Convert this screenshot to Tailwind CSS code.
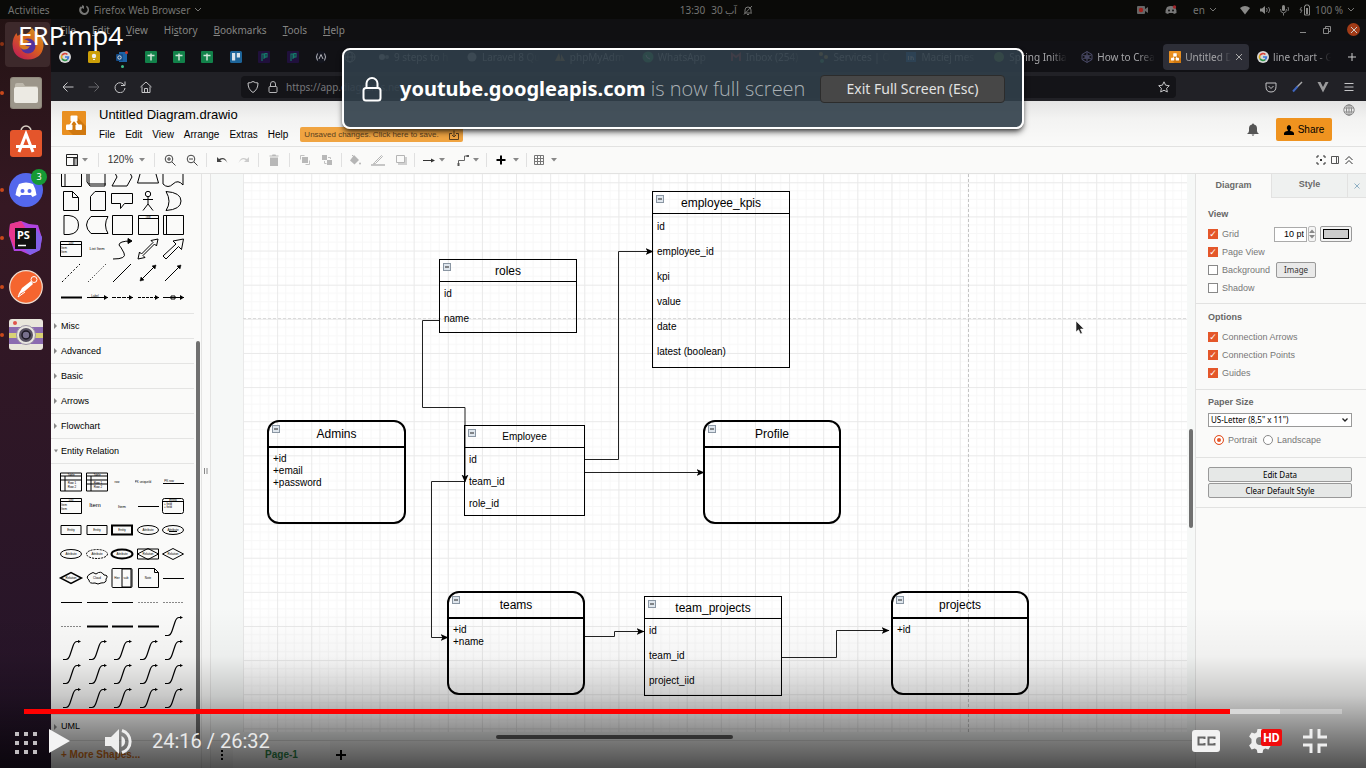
<!DOCTYPE html>
<html lang="en">
<head>
<meta charset="utf-8">
<meta name="viewport" content="width=device-width, initial-scale=1">
<title>ERP.mp4</title>
<script src="https://cdn.jsdelivr.net/npm/@tailwindcss/browser@4"></script>
</head>
<body class="bg-black">
<svg class="absolute size-0">
  <defs>
    <marker id="arrow" viewBox="0 0 8 8" refX="7.5" refY="4" markerWidth="8" markerHeight="8" markerUnits="userSpaceOnUse" orient="auto"><path d="M0 0.5L8 4L0 7.5L2 4Z" fill="#000" stroke="none"/></marker>
    <symbol id="google" viewBox="0 0 12 12"><circle cx="6" cy="6" r="6" fill="#d8d8d8"/><g fill="none" stroke-width="1.7"><path d="M3 4.3A3.4 3.4 0 0 1 8.4 3.5" stroke="#d8433a"/><path d="M3 4.2A3.4 3.4 0 0 0 3 7.8" stroke="#dba818"/><path d="M3 7.7A3.4 3.4 0 0 0 8.3 8.5" stroke="#2f9549"/><path d="M6 6h3.4A3.4 3.4 0 0 1 8.2 8.6" stroke="#3b74d8"/></g></symbol>
    <symbol id="sheet" viewBox="0 0 12 12"><rect width="12" height="12" rx="1" fill="#12824a"/><path d="M2.500 4.500h7M6 2.500v7" stroke="#cfe5d8" stroke-width="1.5"/></symbol>
    <symbol id="drawio" viewBox="0 0 24 24"><rect width="24" height="24" rx="1" fill="#e98f20"/><path d="M14 5l10 10v9H11L5 18l6-7z" fill="#d0780f"/><path d="M12 8L7 16M12 8l5 8" stroke="#fff" stroke-width="1.6"/><rect x="8.500" y="4.500" width="7" height="6" rx="1" fill="#fff"/><rect x="4" y="13.500" width="6.500" height="5.500" rx="1" fill="#fff"/><rect x="13.500" y="13.500" width="6.500" height="5.500" rx="1" fill="#fff"/></symbol>
    <symbol id="fold" viewBox="0 0 8 8"><rect x=".5" y=".5" width="7" height="7" fill="#dfe6ed" stroke="#8a96a3"/><path d="M2 4h4" stroke="#222"/></symbol>
    <symbol id="p" viewBox="0 0 12 12"><rect width="12" height="12" rx="1" fill="#20103c"/><path d="M4 10V3h2v5M7 7V2.500h2V6H7" fill="none" stroke="#147a68" stroke-width="1.1"/></symbol>
    <symbol id="caret" viewBox="0 0 6 4"><path d="M0 0h6L3 3.500z"/></symbol>
  </defs>
</svg>

<div class="relative flex h-screen flex-col overflow-hidden bg-[#121214] font-['Noto_Sans',sans-serif] text-[10px] leading-none text-[#858583]">

  <!-- System bar -->
  <header class="flex h-[19px] shrink-0 items-center bg-[#0a0a08] pr-[11px] pl-2 text-[#747472]">
    <div class="flex flex-1 items-center">
      <span>Activities</span>
      <svg class="ml-7 size-3" viewBox="0 0 12 12"><path d="M2.500 2.500A5 5 0 1 0 9.500 2.300L8 1.800l.6 2A3 3 0 1 1 4 4l2 1V2L4.300 1 3.700 3z" fill="#777775"/></svg>
      <span class="ml-1">Firefox Web Browser</span>
      <svg class="ml-1 h-1.5 w-2" viewBox="0 0 8 6"><path d="M1 1l3 3 3-3" fill="none" stroke="#777775"/></svg>
    </div>
    <div class="flex items-center gap-1.5">
      <span>13:30</span><span>30 &#x622;&#x628;</span>
      <svg class="size-2.5" viewBox="0 0 10 10"><path d="M1 8h8M2 7.500V5a3 3 0 0 1 6 0v2.500M4 9.500h2M1 9.500L9 1" fill="none" stroke="#777775"/></svg>
    </div>
    <div class="-ml-[70px] flex flex-1 items-center justify-end">
      <svg class="h-2.5 w-3" viewBox="0 0 12 10"><rect y="1" width="8" height="8" rx="1" fill="#666"/><path d="M8 4l3-2v6L8 6z" fill="#666"/><circle cx="4" cy="5" r="2.200" fill="#a3221d"/></svg>
      <svg class="ml-4 h-2.5 w-3" viewBox="0 0 12 10"><path d="M2 2q4-2 8 0q2 3 1.500 6L9 9l-1-1H4L3 9 .5 8Q0 5 2 2z" fill="#777"/><circle cx="4" cy="5.500" r="1" fill="#111"/><circle cx="8" cy="5.500" r="1" fill="#111"/><circle cx="9.500" cy="2" r="1.700" fill="#a0262b"/></svg>
      <span class="ml-4">en</span>
      <svg class="ml-1 h-1.5 w-2" viewBox="0 0 8 6"><path d="M1 1l3 3 3-3" fill="none" stroke="#777775"/></svg>
      <svg class="ml-[22px] h-2.5 w-3" viewBox="0 0 12 10"><path d="M1 3q5-4 10 0L6 9.500z" fill="#8a8a88"/></svg>
      <svg class="ml-2 h-2.5 w-3" viewBox="0 0 12 10"><path d="M1 3.500h2L6 1v8L3 6.500H1z" fill="#8a8a88"/><path d="M7.500 3q1.500 2 0 4M9.500 2q2.500 3 0 6" fill="none" stroke="#777"/></svg>
      <svg class="ml-2 h-3 w-3" viewBox="0 0 12 12"><rect x="3" y="1" width="3" height="6" rx="1.500" fill="#8a8a88"/><path d="M1.500 5q0 4 3 4t3-4M4.500 9v2.500M9 3q1 2 0 4" fill="none" stroke="#777"/></svg>
      <svg class="ml-2 h-3 w-3" viewBox="0 0 12 12"><path d="M2.500 3L1 6h2L1.500 9" fill="none" stroke="#777"/><path d="M5.500 2h1V1h3v1h1v9h-5z" fill="none" stroke="#8a8a88"/><path d="M7 4h2v6H7z" fill="#8a8a88"/></svg>
      <span class="ml-1">100 %</span>
      <svg class="ml-1 h-1.5 w-2" viewBox="0 0 8 6"><path d="M1 1l3 3 3-3" fill="none" stroke="#777775"/></svg>
    </div>
  </header>

  <div class="flex min-h-0 flex-1">
    <!-- Dock -->
    <nav class="w-[51px] shrink-0 bg-linear-to-b from-[#241314] via-[#351823] via-25% to-[#24142a] pt-px" aria-label="Dock">
      <div class="flex h-[339px] flex-col justify-between">
        <div class="flex h-12 items-center"><i class="size-1 rounded-full bg-[#8a3113]"></i>
          <div class="ml-px grid size-[45px] place-items-center rounded bg-[#3d292b]">
            <svg class="size-8" viewBox="0 0 32 32"><defs><linearGradient id="ff" x1="1" y1="0" x2=".2" y2="1"><stop offset="0" stop-color="#d0a020"/><stop offset=".5" stop-color="#d8621c"/><stop offset="1" stop-color="#c01d55"/></linearGradient></defs><path d="M20 0q2 3 5 5q7 5 6.500 13Q30 31 16 31.500Q1 31 .5 16Q1 9 4.500 5l1 3Q9 5 14 6q4-2 6-6z" fill="url(#ff)"/><circle cx="16" cy="18" r="7.500" fill="#53319c"/><path d="M7 13q5-4 11 1q-4 0-5 3q2 2 5 1q-3 5-8 3q-4-3-3-8z" fill="#d97a20"/></svg>
          </div></div>
        <div class="flex h-12 items-center"><i class="size-1 rounded-full bg-[#c9481b]"></i>
          <svg class="ml-[6px] size-8" viewBox="0 0 32 32"><rect width="32" height="32" rx="3" fill="#8f887c"/><rect x="1" y="1" width="30" height="30" rx="3" fill="#9c968a"/><path d="M5 8q0-2 2-2h6l2 3h11q2 0 2 2v3H5z" fill="#bdb8ac"/><rect x="4" y="10" width="24" height="16" rx="2" fill="#eceae3"/></svg></div>
        <div class="flex h-12 items-center"><i class="size-1"></i>
          <svg class="ml-[6px] h-8 w-8" viewBox="0 0 32 32"><path d="M11 6a5 5 0 0 1 10 0" fill="none" stroke="#d9d0c5" stroke-width="1.500"/><rect x="0" y="5" width="32" height="27" rx="3" fill="#e4552b"/><path d="M9 27l7-18 7 18M6 21.500h20" fill="none" stroke="#fff" stroke-width="3"/></svg></div>
        <div class="flex h-12 items-center"><i class="size-1 rounded-full bg-[#c9481b]"></i>
          <div class="relative ml-[5px]"><svg class="size-[34px]" viewBox="0 0 34 34"><circle cx="17" cy="17" r="17" fill="#5468ec"/><path d="M10 11q7-3 14 0q3 5 3.500 11l-4 2-1.500-2H12l-1.500 2-4-2Q7 16 10 11z" fill="#fff"/><circle cx="13.500" cy="18" r="2" fill="#5468ec"/><circle cx="20.500" cy="18" r="2" fill="#5468ec"/></svg>
            <span class="absolute -top-1 -right-1 grid size-4 place-items-center rounded-full bg-[#169a35] text-[9px] text-white">3</span></div></div>
        <div class="flex h-12 items-center"><i class="size-1 rounded-full bg-[#c9481b]"></i>
          <svg class="ml-[5px] size-[34px]" viewBox="0 0 34 34"><path d="M1 3l11-3 8 3 9 1 4 13-2 12-10 5-9-4H5L0 14z" fill="#b044e0"/><path d="M1 3l11-3 4 6-9 20H5L0 14z" fill="#e8388e"/><path d="M27 8l6 8-2 13-10 5-5-5z" fill="#8260e8"/><rect x="6" y="7" width="21" height="21" fill="#111"/><text x="8" y="18" font-size="11" font-weight="700" fill="#fff" font-family="Noto Sans, sans-serif">PS</text><path d="M9 24.500h8" stroke="#fff" stroke-width="1.500"/></svg></div>
        <div class="flex h-12 items-center"><i class="size-1 rounded-full bg-[#c9481b]"></i>
          <svg class="ml-[5px] size-[34px]" viewBox="0 0 34 34"><circle cx="17" cy="17" r="16.300" fill="#f5652f" stroke="#f0dccf" stroke-width="1.200"/><circle cx="25" cy="9.500" r="3" fill="none" stroke="#fff"/><path d="M22 11l-9 7-4 7 7-4 8-7z" fill="#fff"/><path d="M16 22l-7 5 2-4M14 20l6-6" stroke="#fff" fill="none"/></svg></div>
        <div class="flex h-12 items-center"><i class="size-1 rounded-full bg-[#c9481b]"></i>
          <svg class="ml-[5px] h-8 w-[34px]" viewBox="0 0 34 32"><rect width="34" height="31" rx="3" fill="#e9e6dc"/><path d="M0 8h34v6H0zM0 19h34v6H0z" fill="#8b6bb0"/><path d="M0 14h34v5H0z" fill="#d9d275"/><circle cx="6" cy="4" r="2" fill="#e0534c"/><circle cx="17" cy="16" r="9.500" fill="#e8e5e0" stroke="#9b93a5"/><circle cx="17" cy="16" r="7" fill="#575161"/><circle cx="17" cy="16" r="4" fill="#77708c" stroke="#1b1722" stroke-width="1.500"/></svg></div>
      </div>
    </nav>

    <!-- Browser -->
    <div class="flex min-w-0 flex-1 flex-col">
      <div class="flex h-[22px] shrink-0 items-center justify-between bg-[#101012] pr-1.5 pb-px pl-[9px]">
        <nav class="flex gap-4"><a href="#"><u>F</u>ile</a><a href="#"><u>E</u>dit</a><a href="#"><u>V</u>iew</a><a href="#">Hi<u>s</u>tory</a><a href="#"><u>B</u>ookmarks</a><a href="#"><u>T</u>ools</a><a href="#"><u>H</u>elp</a></nav>
        <div class="flex items-center gap-4">
          <button aria-label="Minimise"><svg class="size-2" viewBox="0 0 8 8"><path d="M1 6.500h6" stroke="#888"/></svg></button>
          <button aria-label="Restore"><svg class="size-2" viewBox="0 0 8 8"><path d="M.5 2.500h5v5h-5zM2.500 2V.5h5v5H6" fill="none" stroke="#888"/></svg></button>
          <button aria-label="Close" class="grid size-[13px] place-items-center rounded-full bg-[#a13b17]"><svg class="size-2" viewBox="0 0 8 8"><path d="M1 1l6 6M7 1L1 7" stroke="#ccc"/></svg></button>
        </div>
      </div>

      <div class="flex h-[31px] shrink-0 items-center bg-[#111115]">
        <div class="grid w-[313px] shrink-0 grid-cols-11 items-center justify-items-center">
          <svg class="size-3"><use href="#google"/></svg>
          <svg class="size-3" viewBox="0 0 12 12"><rect width="12" height="12" rx="1.500" fill="#cc9f08"/><circle cx="6" cy="5" r="2.200" fill="#eee"/><path d="M5 8.500h2" stroke="#eee"/></svg>
          <span class="relative"><svg class="size-3" viewBox="0 0 12 12"><rect x="3" y="1" width="8" height="10" fill="#1c62a5"/><rect y="3" width="7" height="7" rx="1" fill="#154c87"/><circle cx="3.500" cy="6.500" r="1.700" fill="none" stroke="#ddd"/><circle cx="10.500" cy="1.500" r="1.500" fill="#c3382b"/></svg><i class="absolute top-[14px] left-[5px] size-[3px] rounded-full bg-[#3fbf8a]"></i></span>
          <svg class="size-3"><use href="#sheet"/></svg>
          <svg class="size-3"><use href="#sheet"/></svg>
          <svg class="size-3"><use href="#sheet"/></svg>
          <svg class="size-3" viewBox="0 0 12 12"><rect width="12" height="12" rx="1.500" fill="#1d6499"/><path d="M2 2h3.200v7.500H2zM6.800 2H10v4.500H6.800z" fill="#d8e2ea"/></svg>
          <svg class="size-3"><use href="#p"/></svg>
          <svg class="size-3"><use href="#p"/></svg>
          <svg class="size-3" viewBox="0 0 12 12"><circle cx="6" cy="6" r="6" fill="#14161f"/><path d="M2.500 2.500q-2 3.500 0 7M9.500 2.500q2 3.500 0 7M4 8l2-4.500L8 8" fill="none" stroke="#b5b5bb"/></svg>
          <svg class="size-3" viewBox="0 0 12 12" fill="none" stroke="#999"><circle cx="6" cy="6" r="5"/><ellipse cx="6" cy="6" rx="2.300" ry="5"/><path d="M1 6h10"/></svg>
        </div>
        <div class="ml-2 grid min-w-0 flex-1 grid-cols-11 gap-0.5 text-[#a5a5a8] [&>div]:flex [&>div]:h-[26px] [&>div]:min-w-0 [&>div]:items-center [&>div]:gap-1 [&>div]:rounded-sm [&>div]:pr-1.5 [&>div]:pl-1.5 [&_svg]:shrink-0 [&_span]:min-w-0 [&_span]:flex-1 [&_span]:overflow-hidden [&_span]:leading-4 [&_span]:whitespace-nowrap [&_span]:mask-r-from-70%">
          <div><svg class="size-3" viewBox="0 0 12 12"><circle cx="4" cy="6" r="3" fill="#aaa"/><circle cx="9" cy="6" r="2" fill="#888"/></svg><span>9 steps to h</span></div>
          <div><svg class="size-3" viewBox="0 0 12 12"><circle cx="6" cy="6" r="4.500" fill="#aaa"/></svg><span>Laravel 8 Qu</span></div>
          <div><svg class="size-3" viewBox="0 0 12 12"><path d="M1 10L5 2l2 8zM7 10V3l4 7z" fill="#b07a2a"/></svg><span>phpMyAdm</span></div>
          <div><svg class="size-3" viewBox="0 0 12 12"><circle cx="6" cy="6" r="5.500" fill="#24a850"/><path d="M4 4q0 3 4 4" stroke="#fff" fill="none"/></svg><span>WhatsApp</span></div>
          <div><svg class="size-3" viewBox="0 0 12 12"><path d="M2 10V3l4 3 4-3v7" fill="none" stroke="#c33" stroke-width="2"/></svg><span>Inbox (254)</span></div>
          <div><svg class="size-3" viewBox="0 0 12 12"><circle cx="3" cy="3" r="2" fill="#c93"/><circle cx="8" cy="6" r="2" fill="#c93"/><circle cx="4" cy="10" r="2" fill="#3a6"/></svg><span>Services | O</span></div>
          <div><svg class="size-3" viewBox="0 0 12 12"><rect x="1" y="1" width="10" height="10" fill="#1b69b8"/><path d="M3.500 5v4M6 9V5M6 6.500q2.500-2 2.500 2.500" stroke="#fff" fill="none"/></svg><span>Maciej mes</span></div>
          <div><svg class="size-3" viewBox="0 0 12 12"><circle cx="6" cy="6" r="5" fill="#5a9a3a"/></svg><span>Spring Initia</span></div>
          <div><svg class="size-3" viewBox="0 0 12 12" fill="none" stroke="#4a4a66"><circle cx="6" cy="6" r="2"/><path d="M6 .5l5 3v5l-5 3-5-3v-5zM1 3.500l10 5M11 3.500l-10 5M6 .5v11"/></svg><span>How to Crea</span></div>
          <div class="bg-[#2d2e37]"><svg class="size-3"><use href="#drawio"/></svg><span>Untitled D</span><button aria-label="Close tab"><svg class="size-2" viewBox="0 0 8 8"><path d="M1 1l6 6M7 1L1 7" stroke="#aaa"/></svg></button></div>
          <div><svg class="size-3"><use href="#google"/></svg><span>line chart - G</span></div>
        </div>
        <button aria-label="New tab" class="grid w-[29px] shrink-0 place-items-center"><svg class="size-2.5" viewBox="0 0 10 10"><path d="M5 1v8M1 5h8" stroke="#ccc"/></svg></button>
      </div>

      <div class="flex h-[29px] shrink-0 items-center bg-[#212126]">
        <div class="flex w-[190px] shrink-0 gap-3.5 pl-[11px] [&_svg]:size-3 [&_svg]:fill-none">
          <button aria-label="Back"><svg viewBox="0 0 12 12" stroke="#c5c5c7"><path d="M11.500 6H1M5.500 1.500L1 6l4.500 4.500"/></svg></button>
          <button aria-label="Forward"><svg viewBox="0 0 12 12" stroke="#66666a"><path d="M.5 6H11M6.500 1.500L11 6l-4.500 4.500"/></svg></button>
          <button aria-label="Reload"><svg viewBox="0 0 12 12" stroke="#c5c5c7"><path d="M10.500 4.500A5 5 0 1 0 11 7M11 .5V4.500H7"/></svg></button>
          <button aria-label="Home"><svg viewBox="0 0 12 12" stroke="#c5c5c7"><path d="M.5 6L6 1l5.500 5M2 5.500v6h8v-6M4.500 11V7.500h3V11"/></svg></button>
        </div>
        <div class="flex h-[22px] min-w-0 flex-1 items-center rounded-sm bg-[#141418] px-1.5">
          <svg class="size-3" viewBox="0 0 12 12" fill="none" stroke="#c5c5c7"><path d="M6 .5Q8.500 2 11 2q0 6.500-5 9.500Q1 8.500 1 2q2.500 0 5-1.500z"/></svg>
          <svg class="ml-2 size-3" viewBox="0 0 12 12" fill="none" stroke="#b5b5b7"><rect x="2" y="5.500" width="8" height="6" rx="1"/><path d="M3.500 5.500V3a2.500 2.500 0 0 1 5 0v2.500"/></svg>
          <input aria-label="Address" class="ml-[7px] min-w-0 flex-1 bg-transparent text-[#77777b]" value="https://app.diagrams.net">
          <svg class="size-3" viewBox="0 0 12 12" fill="none" stroke="#c5c5c7"><path d="M6 .8l1.600 3.400 3.700.5-2.700 2.600.7 3.700L6 9.200 2.700 11l.7-3.700L.7 4.700l3.700-.5z"/></svg>
        </div>
        <div class="flex w-[190px] shrink-0 items-center justify-end gap-3.5 pr-[11px] [&_svg]:size-3">
          <svg viewBox="0 0 12 12" fill="none" stroke="#c5c5c7"><path d="M1 2h10v3.500Q11 11 6 11T1 5.500zM3.500 5L6 7.500 8.500 5"/></svg>
          <svg viewBox="0 0 12 12"><path d="M11 1L6 6" stroke="#aaa" stroke-width="1.500"/><path d="M6.500 5.500L2 10.500" stroke="#3f66c0" stroke-width="2"/></svg>
          <svg viewBox="0 0 12 12"><path d="M.5 1h3L6 6l2.500-5h3L6 11.500z" fill="#9a9a9c"/></svg>
          <svg viewBox="0 0 12 12"><path d="M1.500 2.500h9M1.500 6h9M1.500 9.500h9" stroke="#c5c5c7"/></svg>
        </div>
      </div>

      <!-- Diagram editor -->
      <main class="flex min-h-0 flex-1 flex-col bg-[#fafaf9] font-['Liberation_Sans',Arial,sans-serif] text-black">
        <div class="flex h-[46px] shrink-0 border-b border-[#e2e2e1] bg-linear-to-b from-[#e4e4e4] via-[#f3f3f2] via-40% to-[#fafaf9] pt-1.5 pl-[11px]">
          <svg class="mt-1 h-6 w-6"><use href="#drawio"/></svg>
          <div class="ml-[13px] flex-1">
            <h1 class="text-[13px] leading-4">Untitled Diagram.drawio</h1>
            <div class="flex items-center pt-1">
              <nav class="flex gap-2.5"><a href="#">File</a><a href="#">Edit</a><a href="#">View</a><a href="#">Arrange</a><a href="#">Extras</a><a href="#">Help</a></nav>
              <button class="ml-3 flex h-[15px] w-[163px] items-center justify-between rounded-xs bg-[#f0a441] px-1 text-[8px] whitespace-nowrap text-[#5a4020]">Unsaved changes. Click here to save.
                <svg class="size-2.5 shrink-0" viewBox="0 0 10 10" fill="none" stroke="#5a4020"><path d="M3 3.500H.5v6h9v-6H7M5 .5V7M3 5l2 2 2-2"/></svg></button>
            </div>
          </div>
          <svg class="mt-4 mr-[17px] h-[13px] w-3" viewBox="0 0 12 13"><path d="M0 11q2-1.500 2-3V5.500A4 4 0 0 1 5 1.600a1 1 0 0 1 2 0A4 4 0 0 1 10 5.500V8q0 1.500 2 3zM4.500 11.500h3L6 13z" fill="#555"/></svg>
          <button class="mt-[11px] flex h-[23px] w-14 items-center justify-center gap-1 rounded-xs bg-[#ef931f] text-[10px]">
            <svg class="size-2.5" viewBox="0 0 10 10"><path d="M5 0a2.500 2.800 0 0 1 1.200 5v1q3.500.5 3.800 2.200V10H0V8.200Q.3 6.500 3.800 6V5A2.500 2.800 0 0 1 5 0z"/></svg>Share</button>
          <svg class="-mt-[3px] mx-[11px] size-3" viewBox="0 0 12 12" fill="none" stroke="#8a8a8a"><circle cx="6" cy="6" r="5.200"/><ellipse cx="6" cy="6" rx="2.500" ry="5.200"/><path d="M1 4h10M1 8h10M6 1v10"/></svg>
        </div>

        <div class="flex h-[27px] shrink-0 items-center border-b border-[#e2e2e1] pl-[5px] text-[#333] [&>div]:flex [&>div]:h-[14px] [&>div]:items-center [&>div]:justify-center [&>div]:border-r [&>div]:border-[#e0e0e0] [&_svg]:size-3 [&_.c]:h-1 [&_.c]:w-1.5 [&_.c]:fill-[#888]">
          <div class="w-[43px] gap-1"><svg viewBox="0 0 12 12" fill="none" stroke="#222"><path d="M.5.5h11v11H.5zM.5 3.500h11M8 3.500v8"/><path d="M8 4h3.500v7.500H8z" fill="#aaa"/></svg><svg class="c"><use href="#caret"/></svg></div>
          <div class="w-14 gap-1.5 text-[10px]">120%<svg class="c"><use href="#caret"/></svg></div>
          <div class="w-[52px] gap-2.5"><svg viewBox="0 0 12 12" fill="none" stroke="#444"><circle cx="5" cy="5" r="3.800"/><path d="M8 8l3.500 3.500M3 5h4M5 3v4"/></svg><svg viewBox="0 0 12 12" fill="none" stroke="#444"><circle cx="5" cy="5" r="3.800"/><path d="M8 8l3.500 3.500M3 5h4"/></svg></div>
          <div class="w-[52px] gap-2.5"><svg viewBox="0 0 12 12"><path d="M1 3v5h5L4.200 6.200Q8 3.500 11.500 9Q9 1.500 3 5z" fill="#444"/></svg><svg viewBox="0 0 12 12"><path d="M11 3v5H6l1.800-1.800Q4 3.500 .5 9Q3 1.500 9 5z" fill="#ccc"/></svg></div>
          <div class="w-[31px]"><svg viewBox="0 0 12 12" fill="#b8b8b8"><path d="M2 3.500h8V12H2zM1.500 1.500H4l.5-1h3l.5 1h2.500v1h-9z"/></svg></div>
          <div class="w-[52px] gap-2.5"><svg viewBox="0 0 12 12" fill="#b8b8b8"><path d="M3 3h6v6H3z"/><path d="M1.500 5.500v-4h4M10.500 6.500v4h-4" fill="none" stroke="#c2c2c2"/></svg><svg viewBox="0 0 12 12" fill="#b8b8b8"><path d="M1 1h5v5H1zM6 6h5v5H6z"/><path d="M3.500 7v2.500h2M7 3.500h2.500V5" fill="none" stroke="#c2c2c2"/></svg></div>
          <div class="w-[73px] gap-2.5"><svg viewBox="0 0 12 12"><path d="M5 1l5 5-4.500 4.500L1 6.500z" fill="#b5b5b5"/><path d="M3 1l3 3" stroke="#b5b5b5"/><circle cx="11" cy="9.500" r="1" fill="#b5b5b5"/></svg><svg class="w-3.5!" viewBox="0 0 14 12"><path d="M3.500 8.500l7-7 1 1-7 7-2 .5z" fill="none" stroke="#b5b5b5"/><path d="M0 11h14" stroke="#b5b5b5" stroke-width="1.500"/></svg><svg viewBox="0 0 12 12"><path d="M3 3h9v8H3z" fill="#d0d0d0"/><path d="M1.500 1.500h8v7h-8z" fill="#fafaf9" stroke="#b5b5b5"/></svg></div>
          <div class="w-[72px] gap-1"><svg viewBox="0 0 12 12"><path d="M0 6.500h9" stroke="#333"/><path d="M8 4.500l4 2-4 2z" fill="#333"/></svg><svg class="c"><use href="#caret"/></svg><svg class="ml-2" viewBox="0 0 12 12"><path d="M1.500 10V6.500h6V2h3" fill="none" stroke="#666"/><path d="M.5 9h2v3h-2zM9.500 1H12v2H9.500z" fill="#555"/></svg><svg class="c"><use href="#caret"/></svg></div>
          <div class="w-10 gap-1.5"><svg viewBox="0 0 12 12"><path d="M6 1.500v9M1.500 6h9" stroke="#000" stroke-width="2"/></svg><svg class="c"><use href="#caret"/></svg></div>
          <div class="w-9 gap-1.5 border-r-0!"><svg viewBox="0 0 12 12" fill="none" stroke="#777"><path d="M1.500 1.500h9v9h-9zM4.500 1.500v9M7.500 1.500v9M1.500 4.500h9M1.500 7.500h9"/></svg><svg class="c"><use href="#caret"/></svg></div>
          <span class="ml-auto flex gap-1 pr-3 [&_svg]:size-2.5!"><svg viewBox="0 0 10 10" fill="none" stroke="#333"><path d="M1 3V1h2M7 1h2v2M9 7v2H7M3 9H1V7"/><rect x="4.500" y="4.500" width="1" height="1"/></svg><svg viewBox="0 0 10 10" fill="none" stroke="#555"><path d="M1.500 1.500h7v7h-7zM6.500 1.500v7"/></svg><svg viewBox="0 0 10 10" fill="none" stroke="#333"><path d="M1.500 5L5 1.500 8.500 5M1.500 9L5 5.500 8.500 9"/></svg></span>
        </div>

        <div class="flex min-h-0 flex-1">
          <!-- Shape library -->
          <aside class="flex w-[151px] shrink-0 flex-col border-r border-[#e4e4e3] text-[9px]">
            <div class="flex min-h-0 flex-1">
              <div class="w-[143px] shrink-0 overflow-hidden">
                <div class="flex h-[139px] flex-col justify-end overflow-hidden pr-2 pb-1 pl-[7px]"><div id="general" class="grid grid-cols-5"></div></div>
                <div class="[&>button]:flex [&>button]:h-[25px] [&>button]:w-full [&>button]:items-center [&>button]:gap-[3px] [&>button]:border-t [&>button]:border-[#e4e4e3] [&>button]:pl-[3px] [&_svg]:w-1 [&_svg]:h-1.5 [&_svg]:fill-[#888]">
                  <button><svg viewBox="0 0 4 6"><path d="M0 0l3 3-3 3z"/></svg>Misc</button>
                  <button><svg viewBox="0 0 4 6"><path d="M0 0l3 3-3 3z"/></svg>Advanced</button>
                  <button><svg viewBox="0 0 4 6"><path d="M0 0l3 3-3 3z"/></svg>Basic</button>
                  <button><svg viewBox="0 0 4 6"><path d="M0 0l3 3-3 3z"/></svg>Arrows</button>
                  <button><svg viewBox="0 0 4 6"><path d="M0 0l3 3-3 3z"/></svg>Flowchart</button>
                  <button><svg viewBox="0 0 4 6"><path d="M0 1.500h4L2 4.500z"/></svg>Entity Relation</button>
                </div>
                <div class="border-t border-[#e4e4e3] pt-1.5 pr-2 pb-1 pl-[7px]"><div id="entity" class="grid grid-cols-5"></div></div>
                <button class="flex h-6 w-full items-center gap-[3px] border-t border-[#e4e4e3] pl-[3px]"><svg class="h-1.5 w-1 fill-[#888]" viewBox="0 0 4 6"><path d="M0 0l3 3-3 3z"/></svg>UML</button>
              </div>
              <div class="flex-1 pt-[167px]"><div class="mx-auto h-full w-1 rounded-t bg-[#707070]"></div></div>
            </div>
            <button class="h-7 shrink-0 border-t border-[#dcdcdb] pl-2.5 text-left text-[10px] font-bold text-[#d9741a]">+ More Shapes...</button>
          </aside>
          <div class="grid w-[9px] shrink-0 place-items-center border-r border-[#e4e4e3]"><svg class="h-1.5 w-1" viewBox="0 0 4 6"><path d="M.5 0v6M3 0v6" stroke="#888"/></svg></div>

          <div class="flex min-w-0 flex-1 flex-col">
            <div class="relative flex min-h-0 flex-1 bg-[#f6f8f7] pr-2 pb-2 pl-8">
              <!-- Drawing page -->
              <div class="relative min-w-0 flex-1 overflow-hidden bg-white [&>section]:absolute [&>section]:border-black [&_h2]:flex [&_h2]:items-center [&_h2]:justify-center [&_h2]:border-black [&_h2]:text-[12px] [&_section>svg]:absolute [&_section>svg]:top-[3px] [&_section>svg]:left-[3px] [&_section>svg]:size-2 [&_p]:flex [&_p]:items-center [&_p]:pl-1">
                <svg class="absolute inset-0 h-full w-full">
                  <defs>
                    <pattern id="grid" width="34.13" height="34.13" x="0" y="8.3" patternUnits="userSpaceOnUse"><path d="M8.530 0V34.130M17.070 0V34.130M25.600 0V34.130M0 8.530H34.130M0 17.070H34.130M0 25.600H34.130" stroke="#f7f7f7"/><path d="M.5 0V34.130M0 .5H34.130" stroke="#e9e9e9"/></pattern>
                  </defs>
                  <rect width="100%" height="100%" fill="url(#grid)"/>
                  <g transform="translate(-243 -174)" fill="none" stroke="#222">
                    <path d="M968.500 174V760" stroke="#c4c4c4" stroke-dasharray="3 2"/><path d="M243 318.500H1190" stroke="#dadada" stroke-dasharray="3 2"/>
                    <g marker-end="url(#arrow)">
                      <path d="M439 320.500H422.500V407.500H465V482"/><path d="M585 459.500H618.500V251.500H653"/><path d="M585 472.500H704"/><path d="M465 481.500H431.500V637.500H448"/><path d="M585 636.500H614.500V631.500H644"/><path d="M781 657.500H836.500V630.500H889"/>
                    </g>
                  </g>
                </svg>
                <section class="top-[85px] left-[196px] w-[138px] border"><svg><use href="#fold"/></svg><h2 class="h-[22px] border-b">roles</h2><div class="h-[50px] pb-0.5"><p class="h-6">id</p><p class="h-[26px]">name</p></div></section>
                <section class="top-[17px] left-[409px] w-[138px] border"><svg><use href="#fold"/></svg><h2 class="h-[22px] border-b">employee_kpis</h2><div class="grid h-[153px] grid-rows-6 pb-0.5"><p>id</p><p>employee_id</p><p>kpi</p><p>value</p><p>date</p><p>latest (boolean)</p></div></section>
                <section class="top-[246px] left-[24px] h-[104px] w-[139px] rounded-xl border-2"><svg><use href="#fold"/></svg><h2 class="h-[26px] border-b-2">Admins</h2><p class="mt-[5px] h-3">+id</p><p class="h-3">+email</p><p class="h-3">+password</p></section>
                <section class="top-[251px] left-[221px] w-[121px] border"><svg><use href="#fold"/></svg><h2 class="h-[22px] border-b text-[10px]!">Employee</h2><div class="pt-px"><p class="h-[22px]">id</p><p class="h-[22px]">team_id</p><p class="h-[22px]">role_id</p></div></section>
                <section class="top-[246px] left-[460px] h-[104px] w-[138px] rounded-xl border-2"><svg><use href="#fold"/></svg><h2 class="h-[26px] border-b-2">Profile</h2></section>
                <section class="top-[417px] left-[204px] h-[104px] w-[138px] rounded-xl border-2"><svg><use href="#fold"/></svg><h2 class="h-[26px] border-b-2">teams</h2><p class="mt-[5px] h-3">+id</p><p class="h-3">+name</p></section>
                <section class="top-[422px] left-[401px] w-[138px] border"><svg><use href="#fold"/></svg><h2 class="h-[22px] border-b">team_projects</h2><div class="grid h-[76px] grid-rows-3 pb-0.5"><p>id</p><p>team_id</p><p>project_iid</p></div></section>
                <section class="top-[417px] left-[648px] h-[104px] w-[138px] rounded-xl border-2"><svg><use href="#fold"/></svg><h2 class="h-[26px] border-b-2">projects</h2><p class="mt-[5px] h-3">+id</p></section>
              </div>
              <i class="absolute top-[255px] right-0.5 h-[99px] w-1 rounded bg-[#707070]"></i>
              <i class="absolute bottom-px left-[29%] h-1 w-[24%] rounded bg-[#606060]"></i>
            </div>
            <div class="flex h-7 shrink-0 items-center border-t border-[#dcdcdb] bg-[#f4f4f3]">
              <button aria-label="Pages" class="grid w-[22px] place-items-center"><svg class="h-3 w-1" viewBox="0 0 4 12"><path d="M1 1h2v2H1zM1 5h2v2H1zM1 9h2v2H1z"/></svg></button>
              <button class="h-full w-[97px] bg-[#fcfcfb] text-[10px] font-bold text-[#2f8a4a]">Page-1</button>
              <button aria-label="Insert page" class="grid w-[22px] place-items-center"><svg class="size-2.5" viewBox="0 0 10 10"><path d="M5 0v10M0 5h10" stroke="#000" stroke-width="2"/></svg></button>
            </div>
          </div>

          <!-- Format panel -->
          <aside class="w-[171px] shrink-0 border-l border-[#e2e2e1] text-[9px] text-[#777] [&_h3]:font-bold [&_h3]:text-[#666] [&_label]:flex [&_label]:items-center [&_label]:gap-1 [&_input[type=checkbox]]:size-2.5 [&_input[type=checkbox]]:appearance-none [&_input[type=checkbox]]:border [&_input[type=checkbox]]:border-[#888] [&_input[type=checkbox]]:bg-white [&_input[type=checkbox]:checked]:border-[#e4572a] [&_input[type=checkbox]:checked]:bg-[#e4572a] [&_i]:-ml-[14px] [&_i]:w-2.5 [&_i]:text-center [&_i]:font-['DejaVu_Sans'] [&_i]:text-[9px] [&_i]:font-bold [&_i]:text-white [&_i]:not-italic">
            <div class="flex h-6 font-bold text-[#6a6a6a]"><button class="w-[75px] pb-0.5">Diagram</button><button class="w-[76px] border-b border-l border-[#e2e2e1] bg-[#eff1f0] pb-0.5">Style</button><button aria-label="Close panel" class="grid flex-1 place-items-center border-b border-l border-[#e2e2e1] bg-[#eff1f0]"><svg class="size-1.5" viewBox="0 0 6 6"><path d="M.5.5l5 5M5.500.5l-5 5" stroke="#8fb0c4"/></svg></button></div>
            <div class="h-[106px] border-b border-[#e2e2e1] pr-[14px] pl-3">
              <h3 class="pt-3">View</h3>
              <div class="mt-[6px] flex h-[18px] items-center"><label class="flex-1"><input type="checkbox" checked><i>✓</i>Grid</label>
                <input aria-label="Grid size" class="h-[15px] w-[33px] border border-[#aaa] bg-white pr-0.5 text-right text-[9px] text-black" value="10 pt">
                <div class="ml-px flex h-4 w-2 flex-col justify-between rounded-xs border border-[#bbb] bg-[#f4f4f4] py-0.5"><svg class="h-1 w-1.5 rotate-180 fill-[#888]"><use href="#caret"/></svg><svg class="h-1 w-1.5 fill-[#888]"><use href="#caret"/></svg></div>
                <button aria-label="Grid colour" class="ml-1 h-4 w-8 rounded-xs border border-[#999] bg-[#f4f4f4] p-0.5"><div class="h-full border border-black bg-[#ccc]"></div></button></div>
              <label class="h-[18px]"><input type="checkbox" checked><i>✓</i>Page View</label>
              <div class="flex h-[18px] items-center"><label><input type="checkbox">Background</label><button class="ml-1.5 h-4 w-10 rounded-xs border border-[#999] bg-[#e9e9e9] font-['Noto_Sans',sans-serif] text-[8px] text-[#333]">Image</button></div>
              <label class="h-[18px]"><input type="checkbox">Shadow</label>
            </div>
            <div class="h-[86px] border-b border-[#e2e2e1] pl-3"><h3 class="pt-[9px]">Options</h3>
              <label class="mt-[6px] h-[18px]"><input type="checkbox" checked><i>✓</i>Connection Arrows</label><label class="h-[18px]"><input type="checkbox" checked><i>✓</i>Connection Points</label><label class="h-[18px]"><input type="checkbox" checked><i>✓</i>Guides</label></div>
            <div class="h-[68px] border-b border-[#e2e2e1] pr-[14px] pl-3"><h3 class="pt-2">Paper Size</h3>
              <div class="relative mt-1.5"><select aria-label="Paper size" class="h-[14px] w-full appearance-none border border-[#999] bg-white pl-0.5 font-['Noto_Sans',sans-serif] text-[8px] leading-none text-black"><option>US-Letter (8,5" x 11")</option></select><svg class="pointer-events-none absolute top-1 right-1 h-1.5 w-1.5" viewBox="0 0 6 6"><path d="M.5 1.500L3 4l2.500-2.500" fill="none" stroke="#222" stroke-width="1.300"/></svg></div>
              <div class="mt-2 flex gap-1.5 pl-1.5 [&_input]:size-2.5 [&_input]:appearance-none [&_input]:rounded-full [&_input]:border [&_input]:border-[#888] [&_input]:bg-white [&_input:checked]:border-[#e4572a] [&_input:checked]:bg-[#e4572a] [&_input:checked]:shadow-[inset_0_0_0_2px_white]"><label><input type="radio" name="o" checked>Portrait</label><label><input type="radio" name="o">Landscape</label></div></div>
            <div class="flex h-[50px] flex-col gap-px border-b border-[#e2e2e1] pt-[9px] pr-[14px] pl-3 font-['Noto_Sans',sans-serif] text-[8px] text-black"><button class="h-[15px] rounded-xs border border-[#999] bg-[#e6e8e7]">Edit Data</button><button class="h-[15px] rounded-xs border border-[#999] bg-[#e6e8e7]">Clear Default Style</button></div>
          </aside>
        </div>
      </main>
    </div>
  </div>

  <svg class="absolute top-[320px] left-[1075px] h-4 w-2.5" viewBox="0 0 10 16"><path d="M1 1v11l2.500-2.300L5.500 14l1.800-.8L5.500 9H9z" fill="#222" stroke="#fff" stroke-width=".6"/></svg>

  <!-- Full screen notice -->
  <div class="absolute top-12 left-1/2 flex h-[81px] w-[682px] -translate-x-1/2 items-center rounded-lg border-2 border-white bg-[#303e49]/90 pr-[17px] pl-[18px] shadow-md shadow-black/60">
    <svg class="h-[26px] w-5" viewBox="0 0 20 26" fill="none" stroke="#fff" stroke-width="2"><rect x="1.500" y="12" width="17" height="12.500" rx="2.500"/><path d="M4.500 12V7.500a5.500 5.500 0 0 1 11 0V12"/></svg>
    <p class="ml-[18px] flex-1 text-[20px] whitespace-nowrap text-[#a9b0b4]"><b class="text-white">youtube.googleapis.com</b> <span class="font-['Open_Sans',sans-serif] font-light">is now full screen</span></p>
    <button class="h-7 w-[185px] rounded-sm border border-[#2c2c2c] bg-[#474747] text-[14px] text-[#e2e2e2]">Exit Full Screen (Esc)</button>
  </div>

  <!-- Player overlay -->
  <div class="pointer-events-none absolute inset-x-0 bottom-0 h-[160px] bg-[linear-gradient(to_bottom,transparent,rgba(0,0,0,.04)_30%,rgba(0,0,0,.2)_55%,rgba(0,0,0,.48)_80%,rgba(0,0,0,.68))]"></div>
  <h2 class="absolute top-[17px] left-[18px] text-[26px] leading-9 text-white">ERP.mp4</h2>
  <div class="absolute inset-x-0 bottom-0 h-[59px] text-[#eee]">
    <div class="mx-6 flex h-[5px] bg-white/30"><div class="bg-[#f00]" style="width:91.500%"></div><div class="bg-[#d8d8d8]" style="width:3.800%"></div></div>
    <div class="flex h-[54px] items-center pr-[39px] pl-[15px]">
      <button aria-label="Show applications"><svg class="mt-1 h-[22px] w-[22px]" viewBox="0 0 22 22" fill="#c0bdc0"><path d="M0 0h4v4H0zM9 0h4v4H9zM18 0h4v4h-4zM0 9h4v4H0zM9 9h4v4H9zM18 9h4v4h-4zM0 18h4v4H0zM9 18h4v4H9zM18 18h4v4h-4z"/></svg></button>
      <button aria-label="Play" class="ml-3"><svg class="h-6 w-[21px]" viewBox="0 0 21 24"><path d="M0 0l21 12L0 24z" fill="#f4f4f4"/></svg></button>
      <button aria-label="Mute" class="ml-[35px]"><svg class="h-[27px] w-7" viewBox="0 0 28 27"><path d="M0 9h6l8-8v25l-8-8H0z" fill="#eee"/><path d="M16.500 8a6 6 0 0 1 0 11z" fill="#eee"/><path d="M17 2.500a11.500 11.500 0 0 1 0 22" fill="none" stroke="#eee" stroke-width="3"/></svg></button>
      <span class="ml-[19px] flex-1 font-[Roboto,sans-serif] text-[20px] text-[#e8e8e8]">24:16 / 26:32</span>
      <button aria-label="Subtitles"><svg class="h-[22px] w-7" viewBox="0 0 28 22"><rect width="28" height="22" rx="3" fill="#f2f2f2"/><path d="M12.500 9V7.500h-6v7h6V13M22.500 9V7.500h-6v7h6V13" fill="none" stroke="#666" stroke-width="2"/></svg></button>
      <button aria-label="Settings" class="relative ml-7"><svg class="h-6 w-6" viewBox="0 0 24 24"><path fill="#eee" fill-rule="evenodd" d="M9.500 0h5l.7 3.200 2 1.200 3.200-1 2.500 4.200L20.500 10v4l2.400 2.400-2.500 4.200-3.200-1-2 1.200-.7 3.200h-5l-.7-3.200-2-1.200-3.200 1-2.500-4.200L3.500 14v-4L1.100 7.600l2.500-4.200 3.200 1 2-1.200zM12 8a4 4 0 1 0 0 8a4 4 0 0 0 0-8z"/></svg><span class="absolute top-0 left-[13px] grid h-[17px] w-[21px] place-items-center rounded-xs bg-[#f00b0b] font-[Roboto,sans-serif] text-[12px] font-bold text-white">HD</span></button>
      <button aria-label="Exit full screen" class="ml-[31px]"><svg class="size-6" viewBox="0 0 24 24" fill="none" stroke="#eee" stroke-width="3"><path d="M0 8H8V0M16 0v8h8M0 16h8v8M24 16h-8v8"/></svg></button>
    </div>
  </div>
</div>

<script>
  const box = '<path d="M3.500 2.500h20v19h-20z"/>';
  const label = (s, x = 13, y = 13, n = 4) => `<text x="${x}" y="${y}" font-size="${n}" text-anchor="middle" fill="#000" stroke="none">${s}</text>`;
  const line = (w, extra = '') => `<path d="M3 12.500h21" stroke-width="${w}" ${extra}/>`;
  const head = '<path d="M20 10l4 2.500-4 2.500z" fill="#000" stroke="none"/>';
  const table = '<path d="M2.500 3h21v18h-21zM2.500 6h21M2.500 10h21M7 6v15"/>' + label('Table', 13, 6, 3) + label('Row 1', 14, 14, 3) + label('Row 2', 14, 18, 3);
  const list = '<path d="M2.500 4.500h21v15h-21zM2.500 7.500h21"/>' + label('List', 13, 7, 3) + label('Item', 6, 12, 3) + label('Item', 6, 16, 3);
  const curve = '<path d="M5 21.500h3q2.500 0 4-4.500l3-9q1.500-4.500 4-4.500h3" stroke-width="1.200"/><path d="M20 2l3 1.500-3 1.500z" fill="#000" stroke="none"/>';
  const general = [
    box + '<path d="M7 2v19"/>', '<path d="M3 2h18v19H6l-3-4zM5 2v17h17"/>', '<path d="M3 2h15l5 10-5 9H3l5-9z"/>', '<path d="M7 2h12l4.500 16h-21z"/>', '<path d="M3 3q5 4 10 0t10 0v17q-5-6-10-1t-10 0z"/>',
    '<path d="M5.500 2.500h9l6 6v13h-15zM14.500 2.500v6h6"/>', '<path d="M11 2.500h10.500v19h-15v-14z"/>', '<path d="M2.500 4.500h21v10h-8l-4 5v-5h-9z"/>', '<circle cx="13" cy="5" r="2.700"/><path d="M13 8v7M8 10.500h10M13 15l-5 6.500M13 15l5 6.500"/>', '<path d="M6 2.500q15 1 15 9.500t-15 9.500q6-9 0-19z"/>',
    '<path d="M6 2.500h5q9.500 1 9.500 9.500t-9.500 9.500H6z"/>', '<path d="M7 3.500h17q-5 8.500 0 17H7q-9-8.500 0-17z"/>', box, box + '<path d="M3.500 5.500h20"/>' + label('Title', 13, 5, 3), box + '<path d="M6.500 2.500v19"/>',
    list, label('List Item', 13, 13, 4), '<path d="M4 22q14 0 11-6t-5-8q0-4 12-4"/><path d="M19 1.500l4 2.500-4 2.500z" fill="#000"/>', '<path d="M3 22l1.500-7 2 2L18 5.500l-2-2L23 2l-1.500 7-2-2L8 18.500l2 2z"/>', '<path d="M3 19l13-12-3-3 10.500-2-2 10.500-3-3L6 22z"/>',
    '<path d="M4 21L22 3" stroke-dasharray="2 2"/>', '<path d="M4 21L22 3" stroke-dasharray="1 2"/>', '<path d="M4 21L22 3"/>', '<path d="M6 19L20 5"/><path d="M5 20l1-4 3 3zM21 4l-4 1 3 3z" fill="#000" stroke-width=".5"/>', '<path d="M5 20L19 6"/><path d="M21 4l-4 1 3 3z" fill="#000" stroke-width=".5"/>',
    line(2), line(1) + head + label('Label', 11, 12, 3), line(1, 'stroke-dasharray="4 1"') + head, line(1, 'stroke-dasharray="3 1"') + head, line(1) + head + '<path d="M11 11h4v3h-4z"/>'
  ];
  const diamond = '<path d="M2.500 12L13 6.500 23.500 12 13 17.500z"/>' + label('Relation', 13, 13, 3);
  const oval = (w, d = '') => `<ellipse cx="13" cy="12" rx="10.500" ry="4.500" stroke-width="${w}" ${d}/>` + label('Attribute', 13, 13, 3);
  const entityBox = w => `<path d="M3 7.500h20v9H3z" stroke-width="${w}"/>` + label('Entity', 13, 13, 3);
  const entity = [
    table, table + '<path d="M2.500 14h21"/>', label('row', 8, 13, 3), label('PK uniqueId', 8, 13, 3), line(1, 'transform="translate(0 1)"') + label('PK row', 9, 12, 3),
    list, label('Item', 11, 13, 6), label('Item', 13, 14, 4), line(1), '<rect x="2.500" y="4.500" width="21" height="15" rx="2"/><path d="M2.500 7.500h21"/>' + label('Entity', 13, 7, 3) + label('+ field', 8, 11, 3) + label('+ field', 8, 14, 3),
    entityBox(1), entityBox(1), entityBox(2), oval(1), oval(1) + '<path d="M9 13.500h8"/>',
    oval(1), oval(1, 'stroke-dasharray="2 1"'), oval(2), '<path d="M2.500 7h21v10h-21z"/>' + diamond, diamond,
    '<g stroke-width="1.500">' + diamond + '</g>', '<path d="M6 8q3-3 6 0q5-4 8 1q5 0 2 4q1 4-5 4q-3 2-6 0q-6 1-6-3q-4-3 1-6z"/>' + label('Cloud', 13, 13, 3), '<rect x="3" y="2.500" width="20" height="19" rx="1"/><path d="M13 3h9v18h-9z"/>' + label('Hier', 8, 13, 3) + label('sub', 17, 13, 3), '<path d="M3.500 2.500h16l4 4v15h-20zM19.500 2.500v4h4"/>' + label('Note', 13, 13, 3), line(1),
    line(1), line(1), line(1), line(1, 'stroke="#888" stroke-dasharray="2 1"'), line(1, 'stroke="#888" stroke-dasharray="2 1"'),
    line(1, 'stroke="#888" stroke-dasharray="2 1"'), line(2), line(2), line(2), ...Array(16).fill(curve)
  ];
  const fill = (id, items) => document.getElementById(id).innerHTML = items.map(s => `<svg class="h-6 w-[26px] overflow-hidden fill-none stroke-black" viewBox="0 0 26 24">${s}</svg>`).join('');
  fill('general', general);
  fill('entity', entity);
</script>
</body>
</html>
